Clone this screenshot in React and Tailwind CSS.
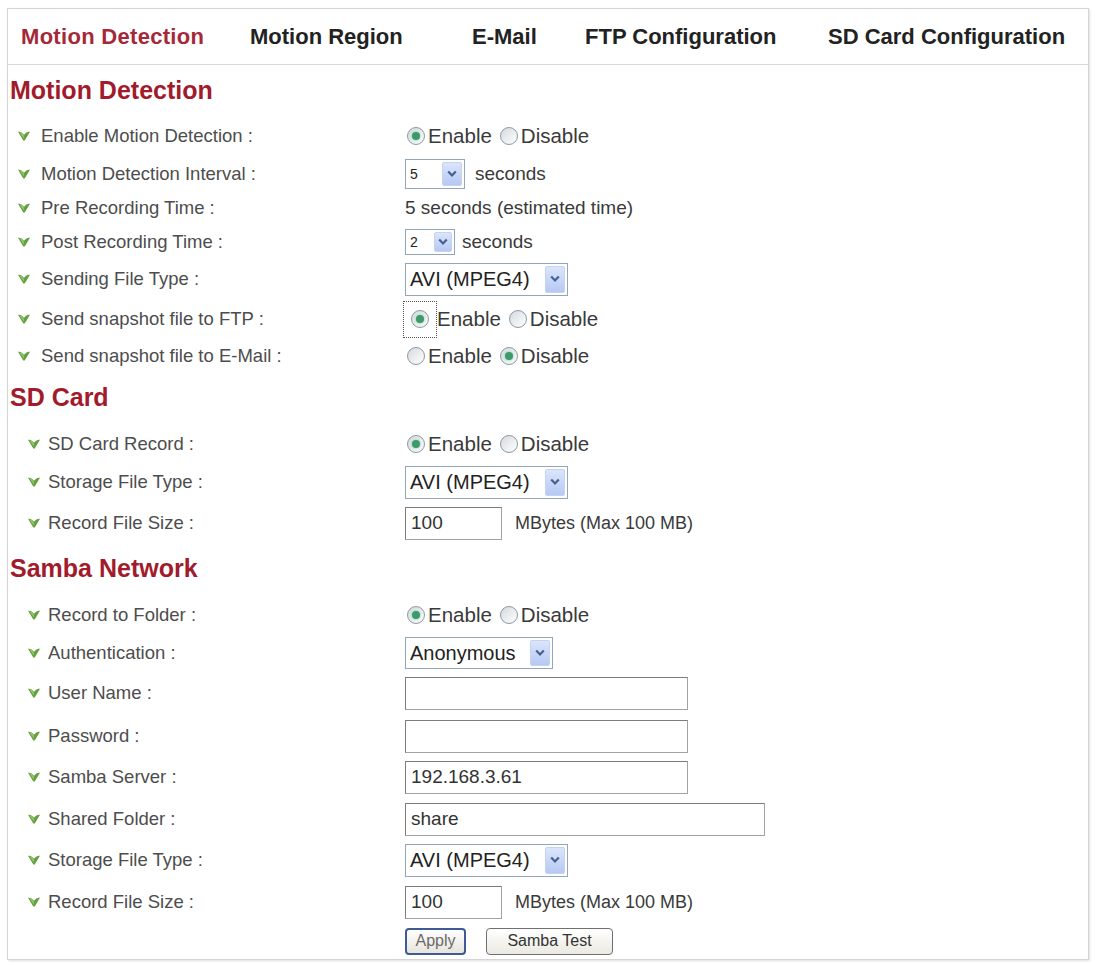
import React from "react";

// Small green "v" bullet shown before every label
const Bullet = () => (
  <svg width="12" height="10" viewBox="0 0 12 10" className="shrink-0">
    <path d="M0 0.8 C2 0.2 4 1.4 6 3.8 C8 1.4 10 0.2 12 0.8 L6.7 9.6 L5.3 9.6 Z" fill="#64a03e" />
    <path d="M1.4 1.4 C3 1.2 4.6 2.4 6 4.4 L6 7.8 Z" fill="#8fc46c" />
  </svg>
);

const Radio = ({ checked }) => (
  <span className="flex h-[18px] w-[18px] shrink-0 items-center justify-center rounded-full border border-[#8a99a6] bg-linear-to-br from-[#d6dadd] to-white">
    {checked && <span className="h-[8px] w-[8px] rounded-full bg-[#3d9a6b] shadow-[0_0_3px_#7fd0a8]" />}
  </span>
);

const EnableDisable = ({ on = true, focus = false }) => (
  <div className="flex items-center text-[20.5px]">
    <span
      className={
        focus
          ? "-ml-[2px] flex h-[37px] w-[34px] items-center justify-center border border-dotted border-[#555]"
          : "flex items-center pl-[2px]"
      }
    >
      <Radio checked={on} />
    </span>
    <span className={focus ? "ml-0" : "ml-[3px]"}>Enable</span>
    <span className="ml-[8px] flex items-center">
      <Radio checked={!on} />
    </span>
    <span className="ml-[3px]">Disable</span>
  </div>
);

// Windows XP style drop-down
const Select = ({ value, box, text, btn }) => (
  <div className={`flex items-stretch border border-[#93a5bd] bg-white ${box}`}>
    <span className={`flex flex-1 items-center pl-[4px] text-[#222] ${text}`}>{value}</span>
    <span
      className={`my-[2px] mr-[2px] flex items-center justify-center rounded-[2px] border border-[#c4d3f1] bg-linear-to-b from-[#dbe5fb] to-[#b6c9f3] ${btn}`}
    >
      <svg width="10" height="8" viewBox="0 0 10 8">
        <path d="M1.2 1.4 L5 5.4 L8.8 1.4" fill="none" stroke="#46608f" strokeWidth="2.2" />
      </svg>
    </span>
  </div>
);

const Input = ({ value = "", w }) => (
  <div
    className={`flex h-[33px] items-center border border-[#a2a2a2] border-t-[#7c7c7c] border-l-[#7c7c7c] bg-white pl-[5px] text-[19px] text-[#333] ${w}`}
  >
    {value}
  </div>
);

const Row = ({ h, label, indent, children }) => (
  <div className={`flex items-center ${h}`}>
    <div className={`flex w-[397px] shrink-0 items-center ${indent ? "pl-[20px]" : "pl-[10px]"}`}>
      <Bullet />
      <span className={`text-[18.5px] text-[#4d4d4d] ${indent ? "ml-[8px]" : "ml-[11px]"}`}>{label}</span>
    </div>
    <div className="flex items-center text-[19px] text-[#3a3a3a]">{children}</div>
  </div>
);

const Heading = ({ h, children }) => (
  <h2 className={`flex items-center pl-[2px] text-[25px] font-bold text-[#a11b2d] ${h}`}>{children}</h2>
);

const AviSelect = () => (
  <Select value="AVI (MPEG4)" box="h-[33px] w-[163px]" text="text-[20px]" btn="w-[20px]" />
);

export default function App() {
  return (
    <div
      className="min-h-screen bg-white pl-[7px] pt-[8px]"
      style={{ fontFamily: '"Liberation Sans", Arial, sans-serif' }}
    >
      <div className="w-[1082px] border border-[#d5d5d5] shadow-[1px_1px_2px_rgba(0,0,0,0.12)]">
        {/* Tabs */}
        <div className="flex h-[56px] items-center border-b border-[#d8d8d8] pl-[13px] text-[22px] font-bold text-[#222]">
          <span className="w-[229px] tracking-[0.3px] text-[#a52839]">Motion Detection</span>
          <span className="w-[222px]">Motion Region</span>
          <span className="w-[113px]">E-Mail</span>
          <span className="w-[243px]">FTP Configuration</span>
          <span>SD Card Configuration</span>
        </div>

        <div>
          <Heading h="h-[52px]">Motion Detection</Heading>
          <Row h="h-[38px]" label="Enable Motion Detection :">
            <EnableDisable />
          </Row>
          <Row h="h-[38px]" label="Motion Detection Interval :">
            <Select value="5" box="h-[30px] w-[60px]" text="text-[14px]" btn="w-[20px]" />
            <span className="ml-[10px]">seconds</span>
          </Row>
          <Row h="h-[30px]" label="Pre Recording Time :">
            <span>5 seconds (estimated time)</span>
          </Row>
          <Row h="h-[38px]" label="Post Recording Time :">
            <Select value="2" box="h-[26px] w-[50px]" text="text-[14px]" btn="w-[18px]" />
            <span className="ml-[7px]">seconds</span>
          </Row>
          <Row h="h-[36px]" label="Sending File Type :">
            <AviSelect />
          </Row>
          <Row h="h-[44px]" label="Send snapshot file to FTP :">
            <EnableDisable focus />
          </Row>
          <Row h="h-[30px]" label="Send snapshot file to E-Mail :">
            <EnableDisable on={false} />
          </Row>

          <Heading h="h-[54px]">SD Card</Heading>
          <Row indent h="h-[38px]" label="SD Card Record :">
            <EnableDisable />
          </Row>
          <Row indent h="h-[38px]" label="Storage File Type :">
            <AviSelect />
          </Row>
          <Row indent h="h-[44px]" label="Record File Size :">
            <Input value="100" w="w-[97px]" />
            <span className="ml-[13px] text-[18px]">MBytes (Max 100 MB)</span>
          </Row>

          <Heading h="h-[48px]">Samba Network</Heading>
          <Row indent h="h-[44px]" label="Record to Folder :">
            <EnableDisable />
          </Row>
          <Row indent h="h-[32px]" label="Authentication :">
            <Select value="Anonymous" box="h-[32px] w-[148px]" text="text-[20px]" btn="w-[20px]" />
          </Row>
          <Row indent h="h-[48px]" label="User Name :">
            <Input w="w-[283px]" />
          </Row>
          <Row indent h="h-[38px]" label="Password :">
            <Input w="w-[283px]" />
          </Row>
          <Row indent h="h-[44px]" label="Samba Server :">
            <Input value="192.168.3.61" w="w-[283px]" />
          </Row>
          <Row indent h="h-[40px]" label="Shared Folder :">
            <Input value="share" w="w-[360px]" />
          </Row>
          <Row indent h="h-[42px]" label="Storage File Type :">
            <AviSelect />
          </Row>
          <Row indent h="h-[42px]" label="Record File Size :">
            <Input value="100" w="w-[97px]" />
            <span className="ml-[13px] text-[18px]">MBytes (Max 100 MB)</span>
          </Row>
          <div className="flex h-[36px] items-center pl-[397px]">
            <button className="flex h-[27px] w-[61px] items-center justify-center rounded-[4px] border-2 border-[#3f5b95] bg-linear-to-b from-white to-[#e6e4dc] text-[16px] text-[#6a6a6a]">
              Apply
            </button>
            <button className="ml-[20px] flex h-[27px] w-[127px] items-center justify-center rounded-[4px] border border-[#707070] bg-linear-to-b from-white to-[#ebe9e2] text-[16px] text-[#333]">
              Samba Test
            </button>
          </div>
        </div>
      </div>
    </div>
  );
}
